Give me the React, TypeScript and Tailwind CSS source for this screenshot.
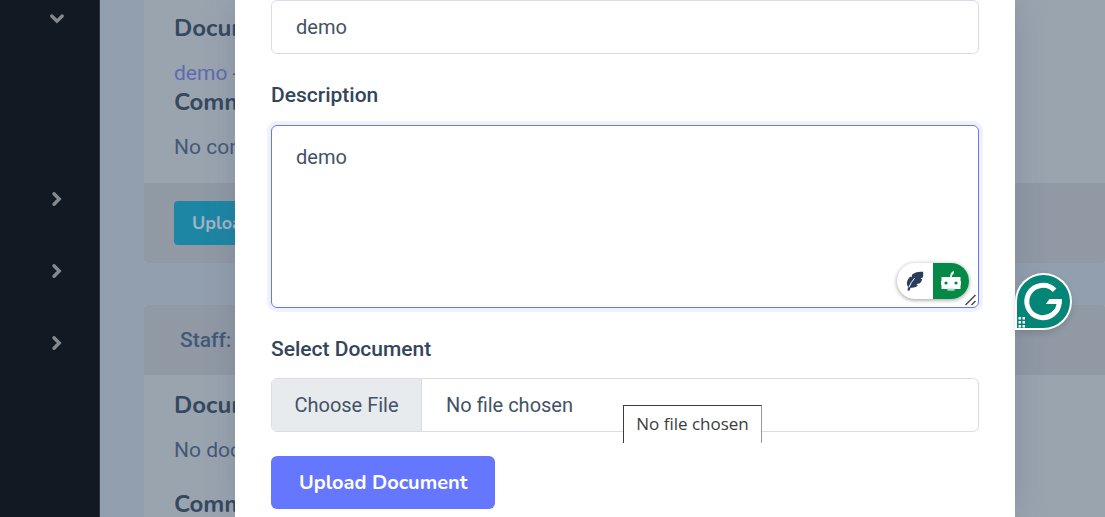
import React from "react";

function Chevron({ down = false, label }: { down?: boolean; label: string }) {
  return (
    <button type="button" aria-label={label} aria-expanded={down} className="flex h-6 w-6 items-center justify-center text-[#84898f]">
      <svg viewBox="0 0 16 16" className={down ? "h-4 w-4 rotate-90" : "h-4 w-4"} fill="none" stroke="currentColor" strokeWidth="3.4" strokeLinecap="round">
        <path d="M5 2.8 L10.2 8 L5 13.2" />
      </svg>
    </button>
  );
}

function Sidebar() {
  return (
    <nav aria-label="Main" className="flex w-[100px] shrink-0 flex-col items-start border-r border-[#26343f] bg-[#111923] pt-[7px] pl-[45px]">
      <Chevron down label="Collapse section" />
      <div className="mt-[156px] flex flex-col gap-12">
        <Chevron label="Expand first section" />
        <Chevron label="Expand second section" />
        <Chevron label="Expand third section" />
      </div>
    </nav>
  );
}

function CardHeading({ children }: { children: React.ReactNode }) {
  return <h5 className="font-['Nunito','Open_Sans',sans-serif] text-2xl leading-7 font-bold text-[#34485f]">{children}</h5>;
}

function Cards() {
  return (
    <main className="min-w-0 flex-1 bg-[#929fae] pl-11 text-[21px] text-[#445877]">
      <section className="bg-[#9aa4af]">
        <div className="h-[183px] px-[30px] pt-[14px]">
          <CardHeading>Documents</CardHeading>
          <p className="mt-4 leading-[30px]">
            <a href="#demo" className="text-[#5f69b4]">demo</a> -
          </p>
          <CardHeading>Comments</CardHeading>
          <p className="mt-4 leading-[30px]">No comments</p>
        </div>
        <div className="rounded-b bg-[#9099a4] px-[30px] py-[18px]">
          <button type="button" className="block h-11 rounded bg-[#1d86a4] px-[18px] font-['Nunito','Open_Sans',sans-serif] text-lg font-bold text-[#a3b4c4]">
            Upload
          </button>
        </div>
      </section>
      <section className="mt-[42px] bg-[#9aa4af]">
        <header className="rounded-t bg-[#9099a4] px-9 py-5 leading-[30px] font-medium">Staff:</header>
        <div className="px-[30px] pt-4">
          <CardHeading>Documents</CardHeading>
          <p className="mt-4 leading-[30px]">No documents</p>
          <div className="mt-[25px]">
            <CardHeading>Comments</CardHeading>
          </div>
        </div>
      </section>
    </main>
  );
}

function WritingTools() {
  return (
    <div className="absolute right-[10px] bottom-[9px] flex h-9 w-[72px] overflow-hidden rounded-full bg-white shadow-[0_1px_4px_rgba(0,0,0,0.4)]">
      <button type="button" aria-label="Rewrite" className="flex flex-1 items-center justify-center text-[#2a3d5e]">
        <svg viewBox="0 0 18 20" className="h-5 w-[18px]" fill="currentColor">
          <path d="M17 .8C12.500 .2 8.500 1.300 6.200 3.600L5.600 6.200L4.200 5.400C1.400 8.200 .3 11.500 1.200 14.600L2 15.200L1.600 19.400L3.400 19.700L4.600 16.700C8 17 10.500 16 12 14.300L10.200 13.300L14 12.200C15.200 11 15.900 9.700 16.200 8.300L14.600 7.700L16.700 6.600C17.400 4.600 17.500 2.600 17 .8Z" />
          <path d="M2.800 16.500L5.300 11.500L8.600 7.200" fill="none" stroke="white" strokeWidth="1" />
        </svg>
      </button>
      <button type="button" aria-label="Assistant" className="flex flex-1 items-center justify-center bg-[#048a46]">
        <svg viewBox="0 0 20 20" className="h-5 w-5" fill="white">
          <path d="M9.200 6C9 3 10.300 .8 12.800 0C13.200 2.400 12.200 3.800 10.800 4.500V6H19.500V10H20V14H19.500V18H13.500V19.500H6.500V18H.500V14H0V10H.500V6Z" />
          <circle cx="5" cy="12" r="1.600" fill="#048a46" />
          <circle cx="15" cy="12" r="1.600" fill="#048a46" />
          <path d="M6.500 18.200H13.500" stroke="#048a46" strokeWidth=".5" />
        </svg>
      </button>
    </div>
  );
}

function ResizeGrip() {
  return (
    <svg viewBox="0 0 12 12" aria-hidden="true" className="pointer-events-none absolute right-[2px] bottom-[2px] h-3 w-3" stroke="#4a4a4a" strokeWidth="1.5">
      <path d="M.5 11L10.500 1M6.500 11L10.500 7" />
    </svg>
  );
}

function GrammarBadge() {
  return (
    <button type="button" aria-label="Check grammar" className="absolute top-[273px] right-[33px] drop-shadow-md">
      <svg viewBox="0 0 57 57" className="block h-[57px] w-[57px]">
        <path d="M0 57V28.5A28.5 28.5 0 1 1 28.5 57Z" fill="white" />
        <path d="M2 55V28.5A26.5 26.5 0 1 1 28.5 55Z" fill="#058576" />
        <path d="M39.600 17.200A16.200 16.200 0 1 0 44.200 28.400" fill="none" stroke="white" strokeWidth="5" />
        <path d="M34.500 26H46.800C47 28 46.700 30 46.400 31H30.800Z" fill="white" />
        <g fill="white">
          <rect x="3.500" y="44" width="2.500" height="2.500" />
          <rect x="7.500" y="44" width="2.500" height="2.500" />
          <rect x="3.500" y="48" width="2.500" height="2.500" />
          <rect x="7.500" y="48" width="2.500" height="2.500" />
          <rect x="3.500" y="52" width="2.500" height="2.500" />
          <rect x="7.500" y="52" width="2.500" height="2.500" />
        </g>
      </svg>
    </button>
  );
}

function UploadDialog() {
  return (
    <div role="dialog" aria-label="Upload document" className="absolute inset-y-0 right-[90px] left-[235px] bg-white px-9 text-[#445266] shadow-[0_0_32px_rgba(60,75,105,0.2)]">
      <form className="flex flex-col items-start">
        <input aria-label="Name" defaultValue="demo" className="h-[54px] w-full rounded-md border border-[#d9dce9] px-6 outline-none" />
        <label htmlFor="description" className="mt-[26px] text-[21px] leading-[30px] font-medium text-[#33455b]">Description</label>
        <div className="relative mt-[15px] w-full">
          <textarea
            id="description"
            defaultValue="demo"
            className="block h-[183px] w-full resize-none rounded-md border border-[#6576ff] px-6 py-4 leading-[30px] shadow-[0_0_0_4px_#eff1ff] outline-none"
          />
          <WritingTools />
          <ResizeGrip />
        </div>
        <label htmlFor="document" className="mt-[26px] text-[21px] leading-[30px] font-medium text-[#33455b]">Select Document</label>
        <div className="relative mt-[14px] w-full">
          <input
            id="document"
            type="file"
            className="block h-[54px] w-full overflow-hidden rounded-md border border-[#d9dce9] file:mr-6 file:h-[52px] file:w-[150px] file:border-0 file:border-r file:border-solid file:border-[#d5dbe5] file:bg-[#e7ebee] file:px-0"
          />
          <div role="tooltip" className="absolute top-[27px] left-[352px] h-[38px] w-[139px] border border-b-0 border-[#3c3c3c] border-r-[#999] bg-white text-center font-['Segoe_UI','Open_Sans',sans-serif] text-[17px] leading-9 whitespace-nowrap text-[#3c3c3c]">
            No file chosen
          </div>
        </div>
        <button type="button" className="mt-6 h-[53px] rounded-md bg-[#6576ff] px-7 font-['Nunito','Open_Sans',sans-serif] text-xl font-bold text-white">
          Upload Document
        </button>
      </form>
    </div>
  );
}

export default function App() {
  return (
    <div className="relative flex h-screen overflow-hidden font-[Roboto,sans-serif] text-xl">
      <Sidebar />
      <Cards />
      <UploadDialog />
      <GrammarBadge />
    </div>
  );
}
